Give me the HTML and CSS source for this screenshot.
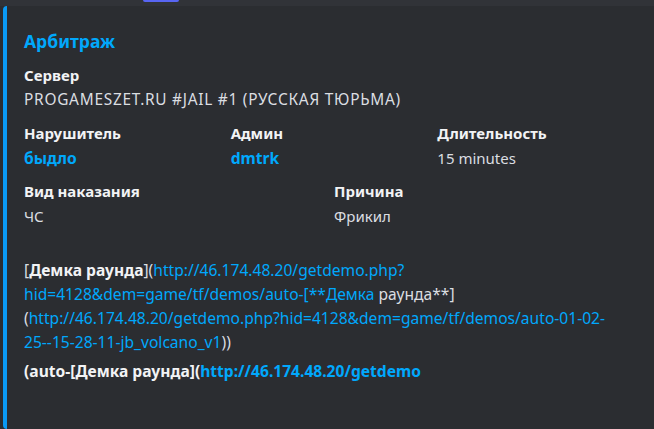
FILE: index.html
```html
<!DOCTYPE html>
<html lang="ru">
<head>
<meta charset="utf-8">
<link rel="stylesheet" href="styles.css">
</head>
<body>
<div class="topbar"><span class="tab"></span></div>
<div class="embed">
  <div class="title">Арбитраж</div>
  <div class="fields">
    <div class="field full">
      <div class="fname">Сервер</div>
      <div class="fvalue caps">PROGAMESZET.RU #JAIL #1 (РУССКАЯ ТЮРЬМА)</div>
    </div>
    <div class="row three">
      <div class="field">
        <div class="fname">Нарушитель</div>
        <div class="fvalue link bold">быдло</div>
      </div>
      <div class="field">
        <div class="fname">Админ</div>
        <div class="fvalue link bold">dmtrk</div>
      </div>
      <div class="field">
        <div class="fname">Длительность</div>
        <div class="fvalue">15 minutes</div>
      </div>
    </div>
    <div class="row two">
      <div class="field">
        <div class="fname">Вид наказания</div>
        <div class="fvalue">ЧС</div>
      </div>
      <div class="field">
        <div class="fname">Причина</div>
        <div class="fvalue">Фрикил</div>
      </div>
    </div>
  </div>
  <div class="desc">
    <p class="para">[<b>Демка раунда</b>](<span class="link">http://46.174.48.20/getdemo.php?<br>hid=4128&amp;dem=game/tf/demos/auto-[**Демка</span> раунда**]<br>(<span class="link">http://46.174.48.20/getdemo.php?hid=4128&amp;dem=game/tf/demos/auto-01-02-<br>25--15-28-11-jb_volcano_v1</span>))</p>
    <p class="para bold">(auto-[Демка раунда](<span class="link">http://46.174.48.20/getdemo</span></p>
  </div>
</div>
</body>
</html>
```
FILE: styles.css
```css
html, body {
  margin: 0;
  padding: 0;
  background: #2b2d31;
  height: 100%;
  overflow: hidden;
}
body {
  font-family: "Noto Sans", "Open Sans", sans-serif;
  color: #dbdee1;
  display: flex;
  flex-direction: column;
}
.topbar {
  height: 6px;
  background: #313338;
  position: relative;
  flex: none;
}
.tab {
  position: absolute;
  left: 143px;
  top: 0;
  width: 36px;
  height: 2px;
  background: #5865f2;
  border-radius: 0 0 2px 2px;
}
.embed {
  flex: 1;
  margin-left: 3px;
  border-left: 4px solid #0a9af5;
  border-radius: 4px 0 0 4px;
  background: #2b2d31;
  padding: 23px 18px 0 17px;
}
.title {
  font-size: 17.5px;
  font-weight: 700;
  line-height: 24px;
  color: #00a8fc;
  margin-bottom: 11px;
}
.fields {
  display: flex;
  flex-direction: column;
  gap: 11px;
}
.row {
  display: grid;
  column-gap: 8px;
}
.three { grid-template-columns: repeat(3, 1fr); }
.two { grid-template-columns: repeat(2, 1fr); }
.fname {
  font-size: 15px;
  font-weight: 700;
  line-height: 22px;
  color: #f2f3f5;
  margin-bottom: 3px;
}
.fvalue {
  font-size: 15px;
  line-height: 22px;
  color: #dbdee1;
}
.fvalue.caps {
  font-size: 15.4px;
  letter-spacing: 0.75px;
}
.fvalue.bold { font-size: 15.6px; }
.link { color: #00a8fc; }
.bold { font-weight: 700; }
.desc {
  margin-top: 31px;
  font-size: 15.6px;
  line-height: 24px;
}
.para { margin: 0 0 5px; }
.para b { color: #f2f3f5; }
.para.bold { color: #f2f3f5; }
```
